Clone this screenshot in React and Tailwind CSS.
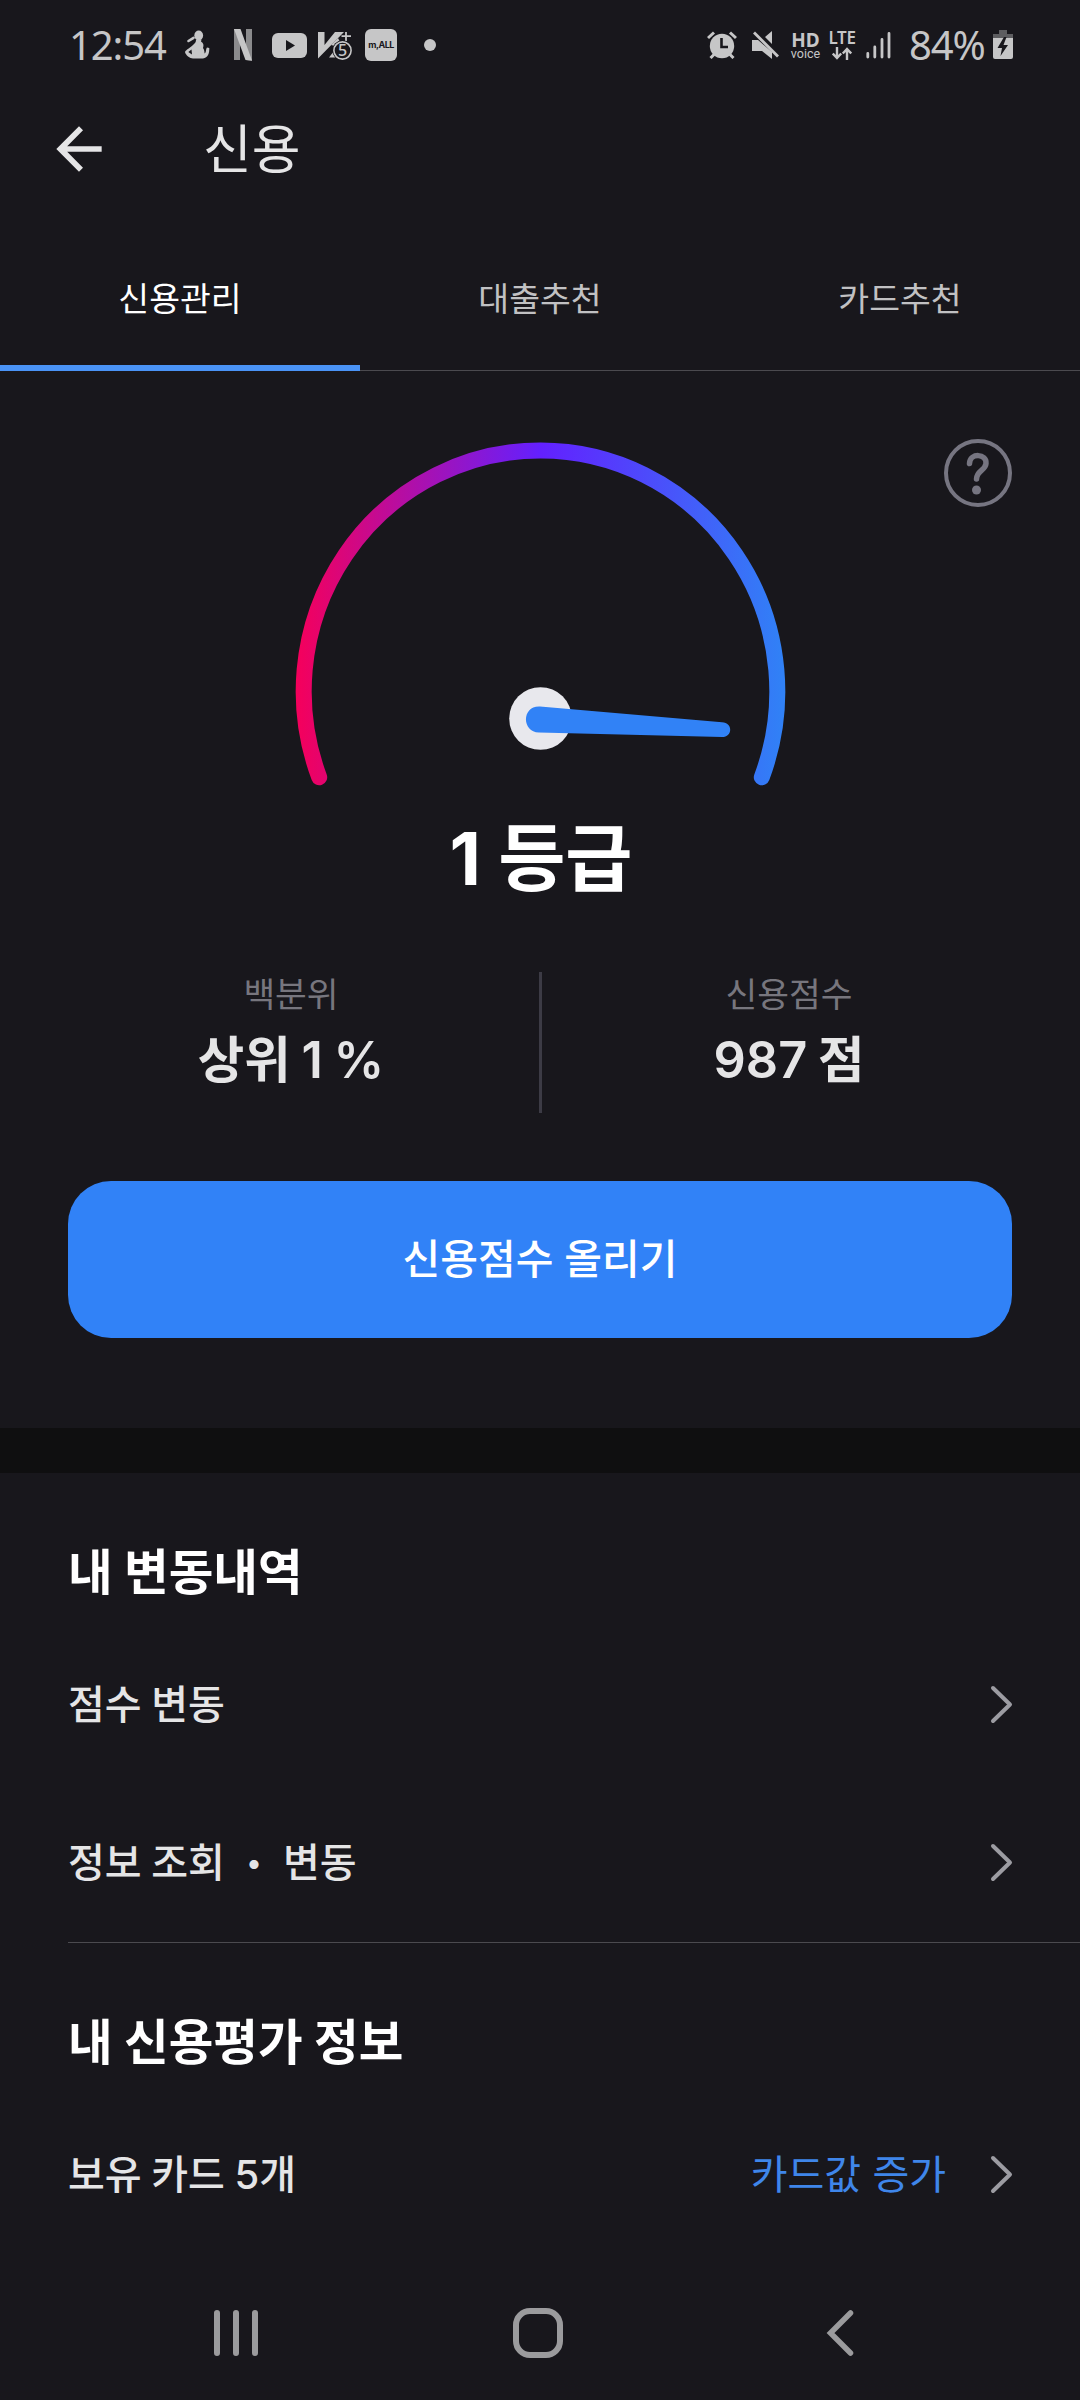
import React, { useState } from "react";

const tabs = ["신용관리", "대출추천", "카드추천"];

const navButtonClass = "flex h-[50px] items-center justify-center";

const StatusBar = () => (
  <div className="flex h-[90px] items-center justify-between pr-[67px] pl-[69px] text-[#c6c6c7]">
    <div className="flex items-center">
      <span className="w-[113px] font-['Noto_Sans'] text-[40px] leading-[50px] tracking-[-1.1px]">12:54</span>
      {/* Monkey */}
      <svg width="26" height="30" viewBox="0 0 26 30" className="ml-[2px]">
        <ellipse cx="14.700" cy="5.500" rx="4.400" ry="5" fill="currentColor" />
        <path d="M4.500 11L9.500 7.800" stroke="currentColor" strokeWidth="2.600" strokeLinecap="round" />
        <path
          d="M12 9.500H17.500L17 11.500C19.500 13 20 15 19 18C20.500 20 20.500 22 20.500 23.500C22.500 22.500 21.500 19.500 23 17.500L25.300 18C25.500 23 24 28 19 28.500H9C6 28.500 1.500 25 1 22C2 19.500 7 17.500 9.500 14.500C11.500 13 12 11.500 12 9.500Z"
          fill="currentColor"
        />
        <path d="M4.300 22L7.500 19.500L8 24.500Z" fill="#18171c" />
      </svg>
      {/* Netflix */}
      <svg width="18" height="32" viewBox="0 0 18 32" className="ml-[24px]">
        <path d="M0 0H6V31L0 31Z M12 0H18V32L12 31Z" fill="#8b8b8d" />
        <path d="M0 0H6.500L18 31.500L11.500 31Z" fill="#c6c6c7" />
      </svg>
      {/* YouTube */}
      <svg width="35" height="25" viewBox="0 0 35 25" className="ml-5">
        <rect width="35" height="25" rx="6" fill="currentColor" />
        <path d="M14 7L23 12.500L14 18Z" fill="#18171c" />
      </svg>
      {/* V3 */}
      <svg width="35" height="30" viewBox="0 0 35 30" className="mt-[3px] ml-[11px]">
        <path d="M0 0H6.500V13L17 0H26L0 26.500Z" fill="currentColor" />
        <path d="M13 13L20 6L22 10L17 14ZM11 25.500L16 19L20 25.500Z" fill="currentColor" />
        <path d="M28 0V9M23.500 4.200H33" stroke="currentColor" strokeWidth="1.800" />
        <circle cx="24.500" cy="18.500" r="10.200" fill="#18171c" />
        <circle cx="24.500" cy="18.500" r="8.600" fill="#18171c" stroke="currentColor" strokeWidth="1.600" />
        <text x="24.500" y="24.300" textAnchor="middle" fill="currentColor" className="font-['Noto_Sans'] text-[16px] font-medium">5</text>
      </svg>
      <div className="ml-[12px] flex h-8 w-8 items-center justify-center rounded-[6px] bg-[#c6c6c7] font-['Inter'] text-[9px] font-bold tracking-[-0.5px] text-[#18171c]">
        m,ALL
      </div>
      <div className="ml-[27px] h-3 w-3 rounded-full bg-[#c6c6c7]" />
    </div>

    <div className="flex items-center">
      {/* Alarm */}
      <svg width="30" height="28" viewBox="0 0 30 28">
        <circle cx="15" cy="15" r="12.200" fill="currentColor" />
        <path d="M1 7L7 1.500M29 7L23 1.500M3.500 27L8 22.500M26.500 27L22 22.500" stroke="currentColor" strokeWidth="3" />
        <path d="M14.500 7V16H21" fill="none" stroke="#18171c" strokeWidth="2.600" />
      </svg>
      {/* Muted speaker */}
      <svg width="28" height="28" viewBox="0 0 28 28" className="ml-[15px]">
        <path d="M0 9H6L20 21V28L10 20H0Z M13 6L20 0V13Z" fill="currentColor" />
        <path d="M2 1.500L26 25.500" stroke="currentColor" strokeWidth="2.800" />
      </svg>
      <div className="ml-[10px] flex w-[31px] flex-col items-center">
        <span className="font-['Noto_Sans'] text-[19px] leading-[16px] font-bold">HD</span>
        <span className="font-['Roboto'] text-[12.5px] leading-[11px]">voice</span>
      </div>
      <div className="ml-[7px] flex w-7 flex-col items-center">
        <span className="font-['Noto_Sans'] text-[17px] leading-[15px] font-semibold tracking-[-0.3px]">LTE</span>
        <svg width="20" height="13" viewBox="0 0 20 13" className="mt-0.5" fill="none" stroke="currentColor" strokeWidth="2.400">
          <path d="M5 0V11M0.800 6.500L5 11L9.200 6.500M15 13V2M10.800 6.500L15 2L19.200 6.500" />
        </svg>
      </div>
      <svg width="25" height="27" viewBox="0 0 25 27" className="ml-[10px]" stroke="currentColor" strokeWidth="2.800" strokeLinecap="round">
        <path d="M1.800 21.500V25M8.800 15V25M16 7.500V25M23 1.500V25" />
      </svg>
      <span className="ml-[18px] w-[84px] font-['Noto_Sans'] text-[40px] leading-[50px] tracking-[-1.1px]">84%</span>
      <svg width="20" height="30" viewBox="0 0 20 30">
        <path d="M6 0H14V4H20V8H0V4H6Z" fill="#5d5d60" />
        <path d="M0 8H20V27A2 2 0 0 1 18 29H2A2 2 0 0 1 0 27Z" fill="currentColor" />
        <path d="M11 7L4.500 18H9L7.500 26L15 15H10.500L13.500 7Z" fill="#18171c" />
      </svg>
    </div>
  </div>
);

const Gauge = () => (
  <svg width="500" height="360" viewBox="290 434.5 500 360" className="mx-auto block">
    <defs>
      <linearGradient id="gauge" gradientUnits="userSpaceOnUse" x1="296" y1="0" x2="785" y2="0">
        <stop offset="0" stopColor="#f5005b" />
        <stop offset="0.500" stopColor="#6320ff" />
        <stop offset="1" stopColor="#3082f6" />
      </linearGradient>
    </defs>
    <path
      d="M319.200 776.700A236.800 241 0 1 1 761.800 776.700"
      fill="none"
      stroke="url(#gauge)"
      strokeWidth="16"
      strokeLinecap="round"
    />
    <circle cx="540.500" cy="718" r="31.300" fill="#e8e8ed" />
    <path
      d="M540 706L722 721.700C733 722 733 736.600 722 736.600L539 732C521.500 731.500 521.500 705 540 706Z"
      fill="#3182f6"
    />
  </svg>
);

const Chevron = () => (
  <svg width="24" height="40" viewBox="0 0 24 40" className="-mr-0.5">
    <path d="M3 3L20 19.500L3 36" fill="none" stroke="#9c9ca2" strokeWidth="4" strokeLinecap="round" strokeLinejoin="round" />
  </svg>
);

const Stat = ({ label, value }) => (
  <div className="flex w-[495px] flex-col items-center">
    <span className="mt-[-2px] text-[34.5px] leading-[50px] text-[#77767e]">{label}</span>
    <span className="mt-[5px] text-[50.5px] leading-[70px] font-semibold [word-spacing:-2px] text-[#e5e5e6]">{value}</span>
  </div>
);

const Row = ({ label, note }) => (
  <div className="flex h-[60px] items-center justify-between">
    <span className="text-[40px] leading-[60px] font-medium [word-spacing:-1px] text-[#e5e5e6]">{label}</span>
    <div className="flex items-center gap-[44px]">
      {note && <span className="text-[40px] leading-[60px] text-[#3f86ea]">{note}</span>}
      <Chevron />
    </div>
  </div>
);

export default function App() {
  const [activeTab, setActiveTab] = useState("신용관리");

  return (
    <div className="flex h-[2400px] w-[1080px] flex-col overflow-hidden bg-[#18171c] font-['Inter','Noto_Sans_CJK_KR',sans-serif] text-white">
      <StatusBar />

      <header className="flex h-[118px] items-center pl-[45px]">
        <svg width="68" height="68" viewBox="0 0 24 24" fill="#e5e5e6">
          <path d="M20 11H7.830l5.590-5.590L12 4l-8 8 8 8 1.410-1.410L7.830 13H20v-2z" />
        </svg>
        <h1 className="mt-[2px] ml-[90px] text-[53px] leading-[70px] text-[#e5e5e6]">신용</h1>
      </header>

      <nav className="mt-[17px] flex h-[146px] border-b border-[#4b4a4f]">
        {tabs.map((tab) => (
          <button
            key={tab}
            onClick={() => setActiveTab(tab)}
            className={
              activeTab === tab
                ? "-mb-px h-[146px] w-[360px] border-b-[6px] border-[#4a93f6] pt-[9px] text-[33.5px] text-white"
                : "-mb-px h-[146px] w-[360px] border-b-[6px] border-transparent pt-[9px] text-[33.5px] text-[#c1c1c3]"
            }
          >
            {tab}
          </button>
        ))}
      </nav>

      <section className="relative h-[1057px] pt-[64px]">
        <Gauge />
        <button className="absolute top-[68px] right-[68px]" aria-label="도움말">
          <svg width="68" height="68" viewBox="0 0 68 68" fill="none" stroke="#767581">
            <circle cx="34" cy="34" r="32" strokeWidth="4" />
            <path d="M25.500 24.500C26 13.500 43 14.500 42 24.500C41.500 31.500 32.500 31.500 32.500 40" strokeWidth="5.500" strokeLinecap="round" />
            <circle cx="32.500" cy="51" r="4.500" fill="#767581" stroke="none" />
          </svg>
        </button>

        <h2 className="mt-[14px] pl-[2px] text-center text-[73px] leading-[100px] font-bold">1 등급</h2>

        <div className="mt-[63px] flex h-[141px] justify-center">
          <Stat label="백분위" value="상위 1 %" />
          <div className="w-[3px] bg-[#3c3b45]" />
          <Stat label="신용점수" value="987 점" />
        </div>

        <div className="mt-[68px] px-[68px]">
          <button className="h-[157px] w-full rounded-[43px] bg-[#3182f7] pt-px text-[41px] font-medium">신용점수 올리기</button>
        </div>
      </section>

      <div className="h-[45px] bg-[#0f0f10]" />

      <section className="px-[68px] pt-[65px]">
        <h3 className="text-[48.5px] leading-[70px] font-bold">내 변동내역</h3>
        <div className="mt-[67px] flex flex-col gap-[98px]">
          <Row label="점수 변동" />
          <Row
            label={
              <>
                정보 조회
                <span className="inline-block w-[58px] text-center align-[4px] text-[29px] leading-none">•</span>
                변동
              </>
            }
          />
        </div>
      </section>

      <div className="mt-[49px] ml-[68px] h-px bg-[#4b4a4f]" />

      <section className="px-[68px] pt-[65px]">
        <h3 className="text-[48.5px] leading-[70px] font-bold">내 신용평가 정보</h3>
        <div className="mt-[67px]">
          <Row label="보유 카드 5개" note="카드값 증가" />
        </div>
      </section>

      <footer className="mt-auto mb-[42px] flex h-[50px] items-center pl-[213px] text-[#9b9b9d]">
        <button className={navButtonClass}>
          <svg width="46" height="46" viewBox="0 0 46 46" stroke="currentColor" strokeWidth="6" strokeLinecap="round">
            <path d="M4 3V43M23 3V43M42 3V43" />
          </svg>
        </button>
        <button className={navButtonClass + " ml-[254px]"}>
          <svg width="50" height="50" viewBox="0 0 50 50" fill="none" stroke="currentColor" strokeWidth="6">
            <rect x="3" y="3" width="44" height="44" rx="14" />
          </svg>
        </button>
        <button className={navButtonClass + " ml-[263px]"}>
          <svg width="28" height="48" viewBox="0 0 28 48" fill="none" stroke="currentColor" strokeWidth="5.500" strokeLinecap="round">
            <path d="M24.500 4L4.500 24L24.500 44" />
          </svg>
        </button>
      </footer>
    </div>
  );
}
